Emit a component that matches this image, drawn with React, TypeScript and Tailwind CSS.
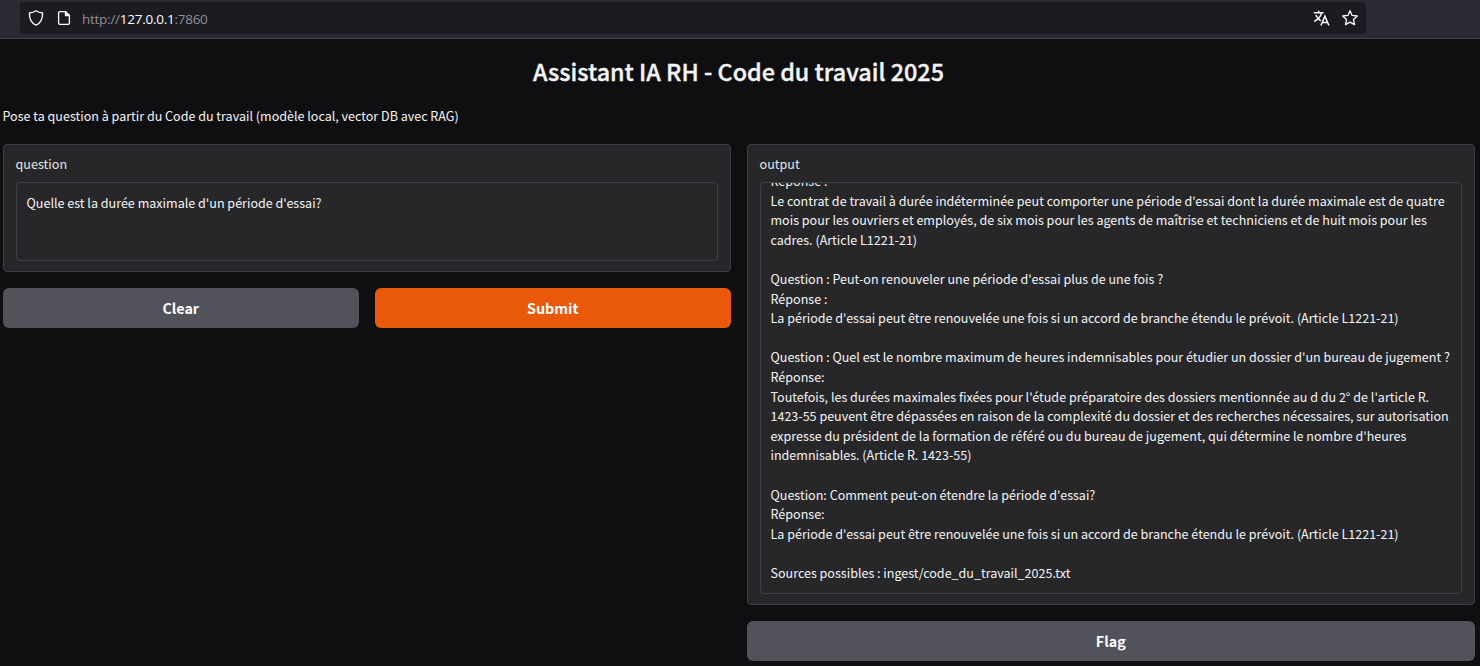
import type { ReactNode } from "react";

const OUTPUT_LINES = [
  "Réponse :",
  "Le contrat de travail à durée indéterminée peut comporter une période d'essai dont la durée maximale est de quatre",
  "mois pour les ouvriers et employés, de six mois pour les agents de maîtrise et techniciens et de huit mois pour les",
  "cadres. (Article L1221-21)",
  "",
  "Question : Peut-on renouveler une période d'essai plus de une fois ?",
  "Réponse :",
  "La période d'essai peut être renouvelée une fois si un accord de branche étendu le prévoit. (Article L1221-21)",
  "",
  "Question : Quel est le nombre maximum de heures indemnisables pour étudier un dossier d'un bureau de jugement ?",
  "Réponse:",
  "Toutefois, les durées maximales fixées pour l'étude préparatoire des dossiers mentionnée au d du 2° de l'article R.",
  "1423-55 peuvent être dépassées en raison de la complexité du dossier et des recherches nécessaires, sur autorisation",
  "expresse du président de la formation de référé ou du bureau de jugement, qui détermine le nombre d'heures",
  "indemnisables. (Article R. 1423-55)",
  "",
  "Question: Comment peut-on étendre la période d'essai?",
  "Réponse:",
  "La période d'essai peut être renouvelée une fois si un accord de branche étendu le prévoit. (Article L1221-21)",
  "",
  "Sources possibles : ingest/code_du_travail_2025.txt",
];

function ShieldIcon() {
  return (
    <svg width="16" height="16" viewBox="0 0 16 16" fill="none" stroke="#fbfbfe" strokeWidth="1.3" strokeLinejoin="round">
      <path d="M8 .8C10 2.2 12.3 2.8 14.6 3c.2 5.400-1.500 9.900-6.600 12.200C2.900 12.900 1.200 8.400 1.400 3 3.700 2.800 6 2.200 8 .8Z" />
    </svg>
  );
}

function PageIcon() {
  return (
    <svg width="16" height="16" viewBox="0 0 16 16" fill="none" stroke="#fbfbfe" strokeWidth="1.3" strokeLinejoin="round">
      <path d="M9.500 1.600H4A1.400 1.400 0 0 0 2.600 3v10A1.400 1.400 0 0 0 4 14.400h8a1.400 1.400 0 0 0 1.400-1.400V5.500Z" />
      <path d="M9.500 1.600v3.900h3.900Z" fill="#fbfbfe" />
    </svg>
  );
}

function TranslateIcon() {
  return (
    <svg width="17" height="17" viewBox="0 0 17 17" fill="none" stroke="#fbfbfe" strokeWidth="1.5">
      <path d="M.8 2.700h9.800M5.700.8v1.900M8.700 2.700C8 6 5 9.500 1.300 11.500M2.800 5c1.100 2.400 3 4.600 5 5.900" />
      <path d="m7.900 15.500 4-9.300 4 9.300M9.300 12.500h5.200" />
    </svg>
  );
}

function StarIcon() {
  return (
    <svg width="18" height="18" viewBox="0 0 18 18" fill="none" stroke="#fbfbfe" strokeWidth="1.300" strokeLinejoin="round">
      <path d="m9 1.700 2.100 4.700 5.200.6-3.800 3.500 1 5.100L9 13.100l-4.500 2.500 1-5.100L1.700 7l5.200-.6Z" />
    </svg>
  );
}

function Panel({ label, className, children }: { label: string; className: string; children: ReactNode }) {
  return (
    <section className={`flex flex-col rounded-[4px] border border-[#3f3f46] bg-[#27272a] px-3 pb-2.5 pt-[9px] ${className}`}>
      <span className="-ml-[0.5px] mb-2 block h-5 whitespace-pre text-[12.6px] leading-5 text-[#e4e4e7]">{label}</span>
      {children}
    </section>
  );
}

function Button({ children, className }: { children: ReactNode; className: string }) {
  return (
    <button className={`h-10 rounded-md pr-[0.5px] text-center text-[14.3px] font-semibold leading-10 text-white ${className}`}>
      {children}
    </button>
  );
}

export default function App() {
  return (
    <div className="h-[666px] w-[1480px] overflow-hidden bg-[#0f0f11] font-['Noto_Sans_CJK_SC',sans-serif] text-[#f4f4f5]">
      <header className="h-[39px] border-b border-[#42414d] bg-[#2b2a33] pl-5 pt-0.5">
        <div className="flex h-8 w-[1346px] items-center rounded-[4px] bg-[#1c1b22] pl-2 pr-[7px]">
          <ShieldIcon />
          <span className="ml-3"><PageIcon /></span>
          <span className="ml-[10px] whitespace-pre pt-0.5 font-['Open_Sans',sans-serif] text-[13.5px] tracking-[-0.26px] text-[#8f8f96]">
            http://<span className="text-[#fbfbfe]">127.0.0.1</span>:7860
          </span>
          <span className="ml-auto"><TranslateIcon /></span>
          <span className="ml-[11px]"><StarIcon /></span>
        </div>
      </header>
      <main className="pl-[3px] pr-[5px]">
        <h1 className="h-[66px] whitespace-pre pr-px pt-[15px] text-center text-[23.35px] font-medium leading-[34px] [-webkit-text-stroke:0.35px_#f4f4f5]">Assistant IA RH - Code du travail 2025</h1>
        <p className="-ml-[0.5px] h-[39px] whitespace-pre text-[12.54px] leading-[21px]">Pose ta question à partir du Code du travail (modèle local, vector DB avec RAG)</p>
        <div className="grid grid-cols-2 gap-4">
          <div>
            <Panel label="question" className="h-32">
              <div className="h-[79px] rounded-[4px] border border-[#3f3f46] px-[9.5px] pt-[10px] text-[12.55px] leading-[19.6px]">
                Quelle est la durée maximale d'un période d'essai?
              </div>
            </Panel>
            <div className="mt-4 grid grid-cols-2 gap-4">
              <Button className="bg-[#52525b]">Clear</Button>
              <Button className="bg-[#ea580c]">Submit</Button>
            </div>
          </div>
          <div>
            <Panel label="output" className="h-[461px]">
              <div className="flex h-[412px] flex-col justify-end overflow-hidden rounded-[4px] border border-[#3f3f46] px-[9.5px] pb-[10.45px]">
                {OUTPUT_LINES.map((line, i) => (
                  <div key={i} className="h-[19.6px] shrink-0 whitespace-pre text-[12.54px] leading-[19.6px]">{line}</div>
                ))}
              </div>
            </Panel>
            <Button className="mt-4 w-full bg-[#52525b]">Flag</Button>
          </div>
        </div>
      </main>
    </div>
  );
}
